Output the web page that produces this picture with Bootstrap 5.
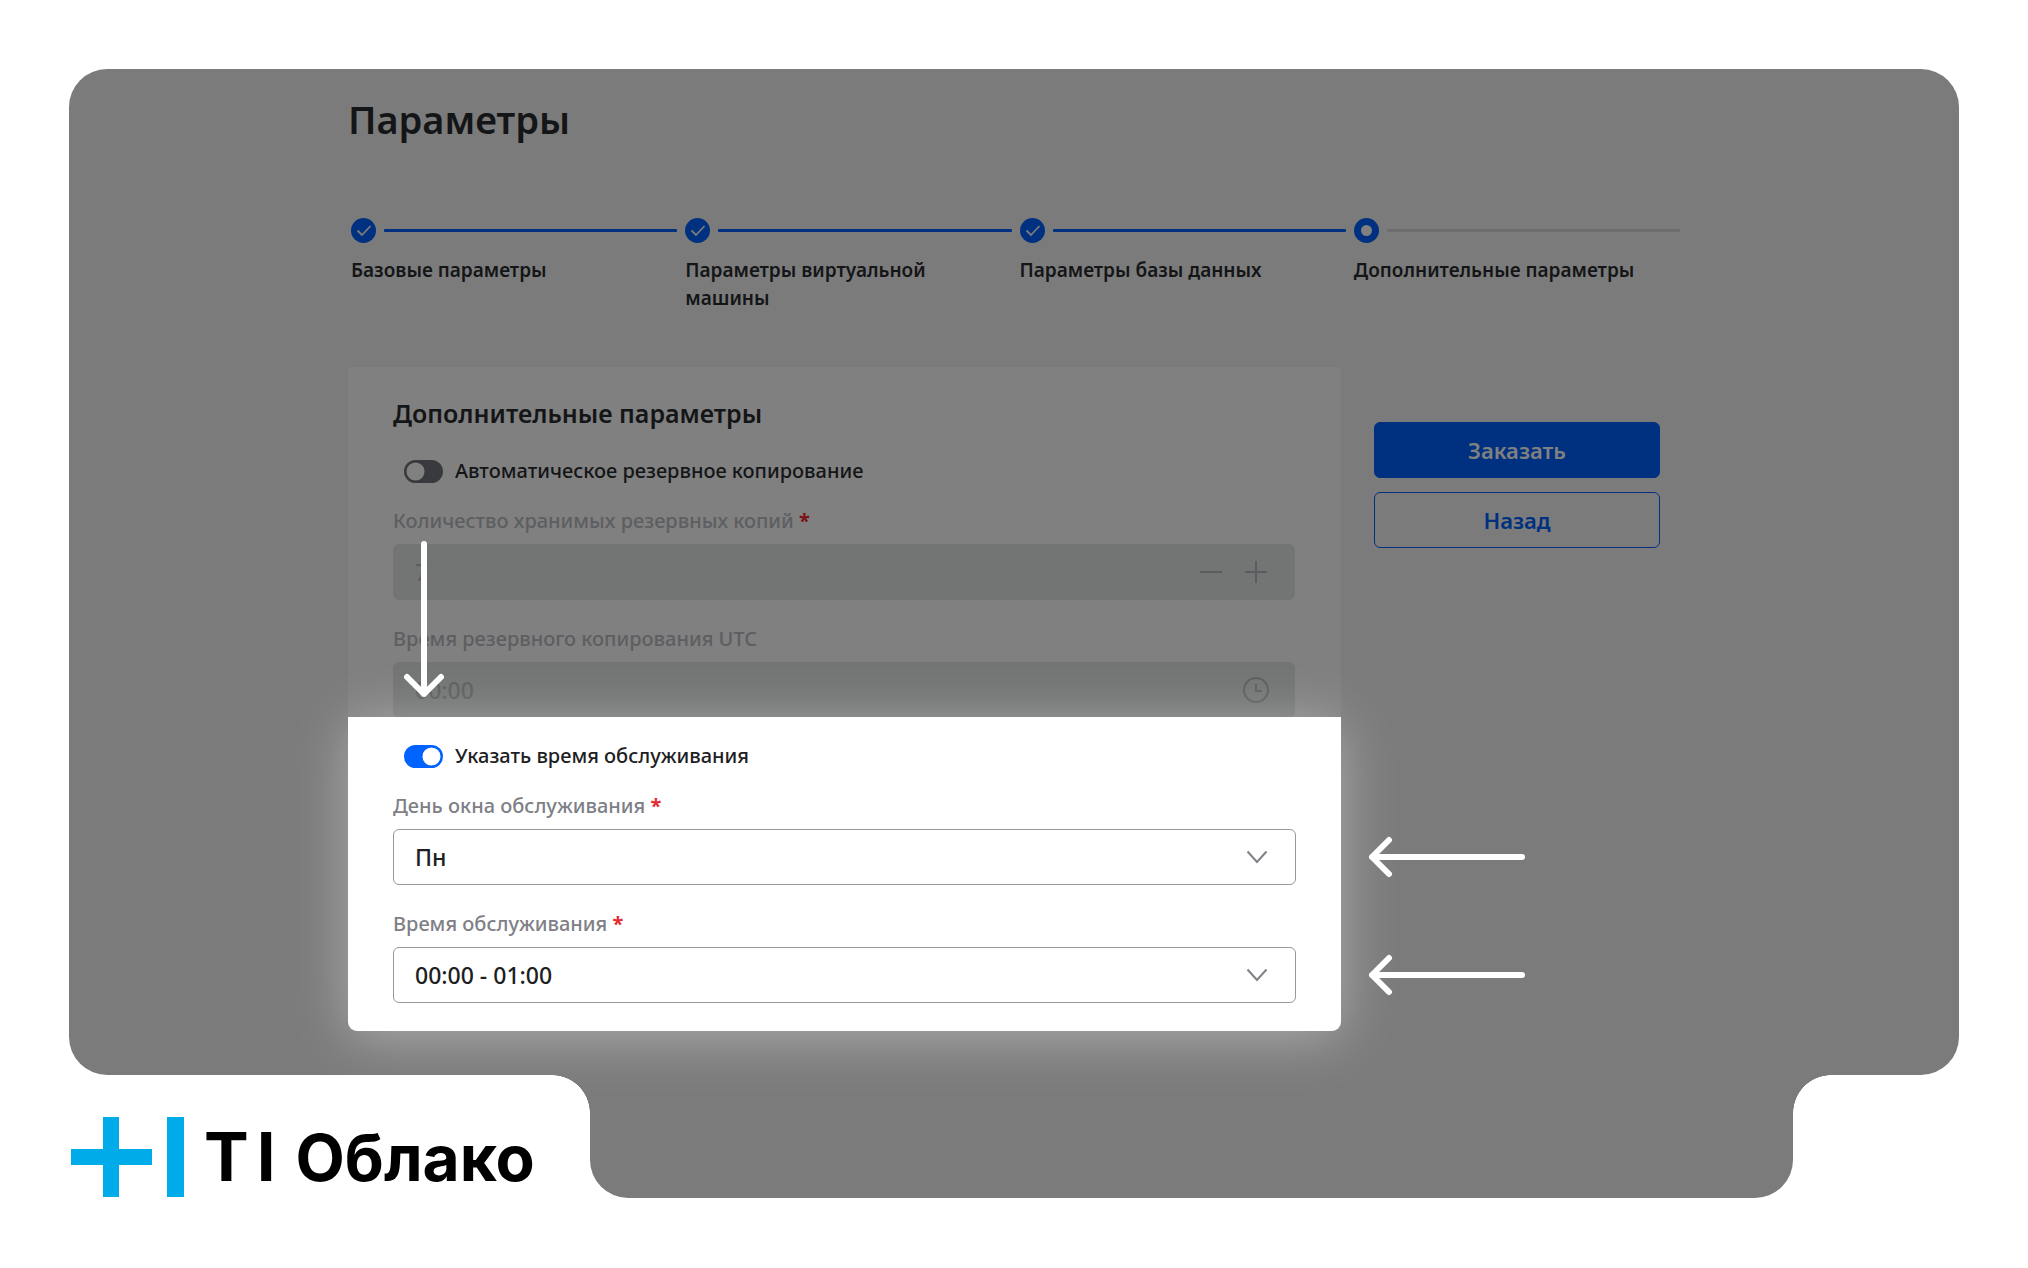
<!DOCTYPE html>
<html lang="ru">
<head>
<meta charset="utf-8">
<meta name="viewport" content="width=device-width, initial-scale=1">
<title>Параметры — TI Облако</title>
<link href="https://cdn.jsdelivr.net/npm/bootstrap@5.3.0/dist/css/bootstrap.min.css" rel="stylesheet">
<script src="https://cdn.jsdelivr.net/npm/bootstrap@5.3.0/dist/js/bootstrap.bundle.min.js"></script>
<style>
  :root {
    --dim: #7b7b7b;
    --dim-card: #808080;
    --dim-blue: #003180;
    --dim-text: #141517;
    --dim-muted: #5d5e61;
    --curve: 38px;
  }
  body {
    font-family: "Noto Sans", sans-serif;
    color: #1d2023;
    background: #fff;
    padding: 69px;
  }
  .stage {
    background: var(--dim);
    color: var(--dim-text);
    border-radius: var(--curve);
    padding: 22px 32px 44px;
  }
  .stage-inner { max-width: 1332px; }
  .page-title { font-size: 38px; line-height: 56px; font-weight: 600; margin-bottom: 71px; }

  .steps { gap: 8px; padding: 0 0 0 3px; min-height: 149px; }
  .step-track { gap: 8px; height: 25px; }
  .step-track svg { width: 25px; height: 25px; flex: none; }
  .step-line { height: 3px; border-radius: 1px; background: var(--dim-blue); }
  .step-line.next { background: #6c6c6c; }
  .step-name { font-size: 19px; line-height: 28px; margin-top: 13px; padding-right: 36px; font-weight: 600; }

  .columns { gap: 33px; }
  .panel-top { background: var(--dim-card); border-radius: 4px 4px 0 0; padding: 30px 46px 0 45px; }
  .panel-spot {
    position: relative;
    z-index: 1;
    margin-top: -1px;
    background: #fff;
    color: #1d2023;
    border-radius: 0 0 9px 9px;
    padding: 24px 45px 28px;
    box-shadow: 0 6px 56px rgba(255, 255, 255, .38);
  }
  .panel-title { font-size: 25px; line-height: 32px; font-weight: 600; margin-bottom: 27px; }

  .form-switch.toggle { padding-left: 11px; min-height: 30px; gap: 12px; margin-bottom: 20px; }
  .toggle .form-check-input {
    width: 39px; height: 23px; margin: 0; float: none;
    border: 2px solid #393a3e; background-color: #393a3e;
    --bs-form-switch-bg: url("data:image/svg+xml,%3csvg xmlns='http://www.w3.org/2000/svg' viewBox='-4 -4 8 8'%3e%3ccircle r='3.8' fill='%23808080'/%3e%3c/svg%3e");
    background-image: var(--bs-form-switch-bg);
  }
  .toggle .form-check-input:checked {
    border-color: #0062ff; background-color: #0062ff;
    background-image: url("data:image/svg+xml,%3csvg xmlns='http://www.w3.org/2000/svg' viewBox='-4 -4 8 8'%3e%3ccircle r='3.8' fill='%23fff'/%3e%3c/svg%3e");
  }
  .toggle .form-check-label { font-size: 20px; line-height: 30px; font-weight: 500; }

  .field { margin-bottom: 24px; }
  .field:last-child { margin-bottom: 0; }
  .field .form-label { display: block; font-size: 20px; line-height: 30px; margin: 0 0 8px; font-weight: 500; color: #7e8086; }
  .panel-top .form-label { color: var(--dim-muted); }
  .req { color: #e52a30; font-weight: 700; }
  .panel-top .req { color: #7d1216; }
  .field .form-control, .field .form-select {
    height: 56px; font-size: 23px; line-height: 32px; border-radius: 6px; padding: 0 21px; font-weight: 500;
  }
  .field .form-control:disabled { background: #737574; border-color: #737574; color: var(--dim-muted); opacity: 1; }
  .field .form-select {
    color: #1d2023; border: 1px solid #97989d;
    background-image: url("data:image/svg+xml,%3csvg xmlns='http://www.w3.org/2000/svg' viewBox='0 0 22 14' fill='none' stroke='%23808187' stroke-width='2'%3e%3cpath d='M1.500 1.500 11 12l9.500-10.500'/%3e%3c/svg%3e");
    background-size: 22px 14px; background-position: right 27px center;
  }
  .field-icons { position: absolute; inset: 0 26px 0 auto; gap: 19px; }
  .field-icons svg { width: 26px; height: 26px; fill: none; stroke: #5c5d60; stroke-width: 2; }
  .field-icons .icon-btn { background: none; border: 0; padding: 0; display: flex; }

  .actions { flex: 0 0 286px; padding-top: 55px; margin-right: 20px; gap: 14px; }
  .actions .btn { height: 56px; border-radius: 6px; font-size: 22px; font-weight: 600; border: 1px solid var(--dim-blue); }
  .btn-order, .btn-order:hover { background: var(--dim-blue); color: #808080; }
  .btn-back, .btn-back:hover { background: transparent; color: var(--dim-blue); }

  /* Callout arrows lie over the form */
  .pointer { position: absolute; z-index: 2; fill: none; stroke: #fff; stroke-width: 6; stroke-linecap: round; stroke-linejoin: round; pointer-events: none; }
  .pointer-down { left: 52px; top: 0; transform: translateY(-177px); width: 48px; height: 160px; }
  .pointer-left { left: 100%; top: 50%; margin: -24px 0 0 72px; width: 160px; height: 48px; }

  .base { height: 123px; }
  .base-center { background: var(--dim); border-radius: 0 0 var(--curve) var(--curve); }
  .base-brand {
    flex: 0 0 521px; padding: 42px 0 0 2px; gap: 20px;
    background: radial-gradient(circle at 0 100%, transparent 37.500px, var(--dim) 38px) top right / 38px 38px no-repeat;
  }
  .base-end {
    flex: 0 0 166px;
    background: radial-gradient(circle at 100% 100%, transparent 37.500px, var(--dim) 38px) top left / 38px 38px no-repeat;
  }
  .brand-text { gap: 20px; font-family: Inter, sans-serif; font-size: 64px; line-height: 80px; font-weight: 700; color: #000; white-space: nowrap; }
  .brand-mark { font-size: 67px; }
  .brand-bar { margin-left: 8px; }
</style>
</head>
<body>
<main class="stage">
  <div class="stage-inner mx-auto">
    <h1 class="page-title">Параметры</h1>

    <ol class="steps d-flex list-unstyled mb-0">
      <li class="flex-fill w-100">
        <div class="step-track d-flex align-items-center">
          <svg viewBox="0 0 25 25"><circle cx="12.500" cy="12.500" r="12.500" fill="#003180"/><path d="M6.500 12.500 11 17l8.500-9" fill="none" stroke="#7b7b7b" stroke-width="1.800"/></svg>
          <span class="step-line flex-fill"></span>
        </div>
        <div class="step-name">Базовые параметры</div>
      </li>
      <li class="flex-fill w-100">
        <div class="step-track d-flex align-items-center">
          <svg viewBox="0 0 25 25"><circle cx="12.500" cy="12.500" r="12.500" fill="#003180"/><path d="M6.500 12.500 11 17l8.500-9" fill="none" stroke="#7b7b7b" stroke-width="1.800"/></svg>
          <span class="step-line flex-fill"></span>
        </div>
        <div class="step-name">Параметры виртуальной машины</div>
      </li>
      <li class="flex-fill w-100">
        <div class="step-track d-flex align-items-center">
          <svg viewBox="0 0 25 25"><circle cx="12.500" cy="12.500" r="12.500" fill="#003180"/><path d="M6.500 12.500 11 17l8.500-9" fill="none" stroke="#7b7b7b" stroke-width="1.800"/></svg>
          <span class="step-line flex-fill"></span>
        </div>
        <div class="step-name">Параметры базы данных</div>
      </li>
      <li class="flex-fill w-100" aria-current="step">
        <div class="step-track d-flex align-items-center">
          <svg viewBox="0 0 25 25"><circle cx="12.500" cy="12.500" r="12.500" fill="#003180"/><circle cx="12.500" cy="12.500" r="5.500" fill="#808080"/></svg>
          <span class="step-line next flex-fill"></span>
        </div>
        <div class="step-name">Дополнительные параметры</div>
      </li>
    </ol>

    <form class="columns d-flex align-items-start">
      <div class="flex-fill">
        <section class="panel-top">
          <h2 class="panel-title">Дополнительные параметры</h2>
          <div class="toggle form-check form-switch d-flex align-items-center">
            <input class="form-check-input" type="checkbox" role="switch" id="backup">
            <label class="form-check-label" for="backup">Автоматическое резервное копирование</label>
          </div>
          <div class="field">
            <label class="form-label" for="copies">Количество хранимых резервных копий <span class="req">*</span></label>
            <div class="position-relative">
              <input class="form-control" id="copies" type="text" inputmode="numeric" value="7" disabled>
              <div class="field-icons d-flex align-items-center">
                <button class="icon-btn" type="button" aria-label="Уменьшить" disabled><svg viewBox="0 0 26 26"><path d="M2 13h22"/></svg></button>
                <button class="icon-btn" type="button" aria-label="Увеличить" disabled><svg viewBox="0 0 26 26"><path d="M2 13h22M13 2v22"/></svg></button>
              </div>
            </div>
          </div>
          <div class="field">
            <label class="form-label" for="backup-time">Время резервного копирования UTC</label>
            <div class="position-relative">
              <input class="form-control" id="backup-time" type="text" value="00:00" disabled>
              <div class="field-icons d-flex align-items-center">
                <svg viewBox="0 0 26 26"><circle cx="13" cy="13" r="12"/><path d="M13 7v7h6"/></svg>
              </div>
            </div>
          </div>
        </section>

        <section class="panel-spot">
          <svg class="pointer pointer-down" viewBox="0 0 48 160"><path d="M24 4v150M7 137l17 17 17-17"/></svg>
          <div class="toggle form-check form-switch d-flex align-items-center">
            <input class="form-check-input" type="checkbox" role="switch" id="service" checked>
            <label class="form-check-label" for="service">Указать время обслуживания</label>
          </div>
          <div class="field">
            <label class="form-label" for="day">День окна обслуживания <span class="req">*</span></label>
            <div class="position-relative">
              <select class="form-select" id="day"><option>Пн</option></select>
              <svg class="pointer pointer-left" viewBox="0 0 160 48"><path d="M154 24H4M21 7 4 24l17 17"/></svg>
            </div>
          </div>
          <div class="field">
            <label class="form-label" for="hours">Время обслуживания <span class="req">*</span></label>
            <div class="position-relative">
              <select class="form-select" id="hours"><option>00:00 - 01:00</option></select>
              <svg class="pointer pointer-left" viewBox="0 0 160 48"><path d="M154 24H4M21 7 4 24l17 17"/></svg>
            </div>
          </div>
        </section>
      </div>

      <div class="actions d-flex flex-column">
        <button class="btn btn-order" type="submit">Заказать</button>
        <button class="btn btn-back" type="button">Назад</button>
      </div>
    </form>
  </div>
</main>

<footer class="base d-flex">
  <div class="base-brand d-flex align-items-start">
    <svg width="113" height="80" viewBox="0 0 113 80" fill="#00abe9" aria-hidden="true"><path d="M32 0h16v32h33v16H48v32H32V48H0V32h32zM96 0h17v80H96z"/></svg>
    <div class="brand-text d-flex align-items-baseline"><span class="brand-mark">T<span class="brand-bar">I</span></span> <span>Облако</span></div>
  </div>
  <div class="base-center flex-fill"></div>
  <div class="base-end"></div>
</footer>
</body>
</html>
